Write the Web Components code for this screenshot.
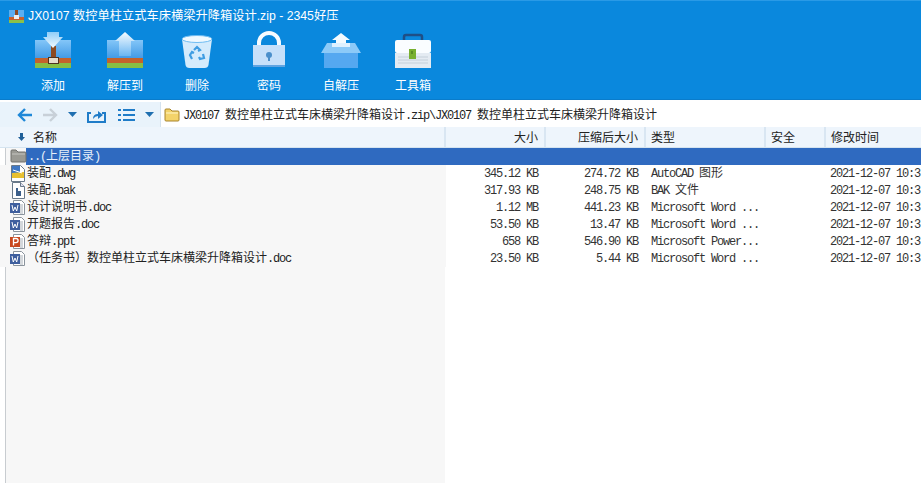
<!DOCTYPE html>
<html>
<head>
<meta charset="utf-8">
<style>
html, body { margin: 0; height: 100%; overflow: hidden; }
body { font-family: "Noto Sans CJK SC", sans-serif; }
</style>
</head>
<body>
<zip-window></zip-window>
<script>
const ICONS = {
  add: `<svg width="42" height="38" viewBox="0 0 42 38">
    <defs><linearGradient id="b" x1="0" y1="0" x2="0" y2="1"><stop offset="0" stop-color="#84c6f8"/><stop offset="1" stop-color="#439be6"/></linearGradient>
    <linearGradient id="w" x1="0" y1="0" x2="0" y2="1"><stop offset="0" stop-color="#8fcdf8"/><stop offset="1" stop-color="#f4fbff"/></linearGradient></defs>
    <path d="M3 9h36v18H3z" fill="url(#b)"/><path d="M3 27h36v5H3z" fill="#c4622c"/><path d="M3 32h36v5H3z" fill="#86bf45"/>
    <path d="M19 15h5v12h-5z" fill="#8c4a22"/><rect x="16.500" y="26.500" width="10" height="6" fill="#e6dccb" stroke="#4e3320"/>
    <path d="M15 1h12v5h4L21 17 11 6h4z" fill="url(#w)"/></svg>`,
  extract: `<svg width="42" height="38" viewBox="0 0 42 38">
    <defs><linearGradient id="b2" x1="0" y1="0" x2="0" y2="1"><stop offset="0" stop-color="#84c6f8"/><stop offset="1" stop-color="#439be6"/></linearGradient>
    <linearGradient id="w2" x1="0" y1="0" x2="0" y2="1"><stop offset="0" stop-color="#f6fcff"/><stop offset="1" stop-color="#6ab6f2"/></linearGradient></defs>
    <path d="M3 9h36v18H3z" fill="url(#b2)"/><path d="M3 27h36v5H3z" fill="#c4622c"/><path d="M3 32h36v5H3z" fill="#86bf45"/>
    <path d="M21 1l10 9h-4v15H15V10h-4z" fill="url(#w2)"/></svg>`,
  del: `<svg width="34" height="38" viewBox="0 0 34 38">
    <path d="M2 8l3.500 26q.5 3 4 3h15q3.500 0 4-3L32 8z" fill="#d4ebfc"/><ellipse cx="17" cy="8" rx="15" ry="3.500" fill="#f0f9ff" stroke="#6fbcf2"/>
    <path d="M14 19l3-3 3 3-2 1M23 23l1 4-4 1-1-2M12 28l-2-4 2-3 2 1" fill="none" stroke="#3f9de2" stroke-width="2.200"/></svg>`,
  lock: `<svg width="34" height="38" viewBox="0 0 34 38">
    <path d="M7 16V12a10 10 0 0 1 20 0v4" fill="none" stroke="#f6fbff" stroke-width="4"/>
    <rect x="1" y="14" width="32" height="22" fill="#c6e0fa"/><path d="M1 34h32v2H1z" fill="#5fa4e2"/><circle cx="17" cy="24" r="3" fill="#4b8fcb"/><path d="M16 25h2v5h-2z" fill="#4b8fcb"/></svg>`,
  self: `<svg width="42" height="38" viewBox="0 0 42 38">
    <path d="M21 2l9 7h-4v6H16V9h-4z" fill="#f4fbff"/><path d="M4 22h34v15H4z" fill="#55a8f0"/><path d="M1 22l6-10h28l6 10z" fill="#8ccaf8"/><path d="M12 12h18v4H12z" fill="#dff1ff"/></svg>`,
  tools: `<svg width="38" height="38" viewBox="0 0 38 38">
    <path d="M10 9V6q0-2 2-2h14q2 0 2 2v3" fill="none" stroke="#1f4f86" stroke-width="2.500"/>
    <rect x="1" y="9" width="36" height="13" rx="2" fill="#fafdff"/><rect x="1" y="22" width="36" height="15" fill="#e4ebf2"/>
    <path d="M4 26h30M4 29h30M4 32h30" stroke="#c5d0da"/><rect x="15" y="18" width="7" height="10" fill="#78b030"/><path d="M18 20v3" stroke="#3c6a18"/></svg>`,
  folder: `<svg width="16" height="15" viewBox="0 0 16 15">
    <path d="M1 3q0-1 1-1h4l2 2h6q1 0 1 1v8q0 1-1 1H2q-1 0-1-1z" fill="#f3d36a" stroke="#a8842c"/><path d="M2 6h12" stroke="#fff6c8"/></svg>`,
  up: `<svg width="17" height="15" viewBox="0 0 17 15">
    <path d="M1 3q0-1 1-1h4l2 2h7q1 0 1 1v8q0 1-1 1H2q-1 0-1-1z" fill="#9a9a94" stroke="#70706c"/><path d="M2 6h13" stroke="#c4c4c0"/></svg>`,
  dwg: `<svg width="16" height="17" viewBox="0 0 16 17">
    <path d="M1.500.5h9l4 4v12h-13z" fill="#fff" stroke="#6a7a8a"/><path d="M2 1h8v7H2z" fill="#3f78c4"/><path d="M2 8l12-1v6H2z" fill="#e8c030"/><path d="M3 5l9 3" stroke="#fff"/><path d="M2 13h12v3H2z" fill="#fff"/></svg>`,
  bak: `<svg width="16" height="17" viewBox="0 0 16 17">
    <path d="M2.500.5h8l4 4v12h-12z" fill="#fff" stroke="#6a7a8a"/><path d="M10.500.5v4h4" fill="#dde" stroke="#6a7a8a"/><path d="M6 6h2v8H6zM8 9h3v5H8z" fill="#3c5f8a"/></svg>`,
  doc: `<svg width="16" height="17" viewBox="0 0 16 17">
    <path d="M3.500 1.500h8l3 3v11h-11z" fill="#fff" stroke="#8a939c"/><path d="M10 6h3M10 8h3M10 10h3M10 12h3M10 14h3" stroke="#a8b0b8"/>
    <rect x="0" y="4" width="10" height="10" fill="#3f5f9e"/><path d="M2 6l1.300 6 1.700-4 1.700 4L8 6" fill="none" stroke="#fff"/></svg>`,
  ppt: `<svg width="16" height="17" viewBox="0 0 16 17">
    <path d="M3.500 1.500h8l3 3v11h-11z" fill="#fff" stroke="#8a939c"/><path d="M10 6h3M10 8h3M10 10h3M10 12h3M10 14h3" stroke="#a8b0b8"/>
    <rect x="0" y="4" width="10" height="10" fill="#c8481e"/><path d="M3.500 12.500v-7h2.500a2 2 0 0 1 0 4.200H3.500" fill="none" stroke="#fff" stroke-width="1.300"/></svg>`
};

// latin runs take 6px a character, han 12px, as in the bitmap font of the reference
class MonoText extends HTMLElement {
  constructor() {
    super();
    this.attachShadow({ mode: "open" });
  }

  connectedCallback() {
    const runs = this.textContent.match(/[\x20-\x7e]+|[^\x20-\x7e]+/g) || [];
    this.shadowRoot.innerHTML = `
      <style>
        :host { display: inline; }
        span { white-space: pre; line-height: 14px; }
        .a { font-family: "Liberation Mono", monospace; font-size: 12px; letter-spacing: -1.200px; }
        .c { font-family: "Noto Sans CJK SC", sans-serif; font-size: 12px; }
      </style>
      ${runs.map(r => `<span class="${/^[\x20-\x7e]/.test(r) ? "a" : "c"}">${r}</span>`).join("")}`;
  }
}

class ToolButton extends HTMLElement {
  constructor() {
    super();
    this.attachShadow({ mode: "open" });
    this.shadowRoot.innerHTML = `
      <style>
        :host { display: flex; flex-direction: column; align-items: center; width: 72px; }
        .icon { height: 38px; display: flex; align-items: flex-end; justify-content: center; margin-bottom: 8px; }
        .label { font-size: 12px; line-height: 16px; color: #fff; }
      </style>
      <div class="icon">${ICONS[this.getAttribute("icon")]}</div>
      <div class="label"><slot></slot></div>`;
  }
}

class TitleBar extends HTMLElement {
  constructor() {
    super();
    this.attachShadow({ mode: "open" });
    this.shadowRoot.innerHTML = `
      <style>
        :host { display: block; height: 100px; box-sizing: border-box; background: #0a88dd; border-top: 1px solid #2a9ae6; border-bottom: 1px solid #0a7ccb; }
        .title { display: flex; align-items: center; gap: 4px; height: 30px; padding-left: 9px; font: 12.250px/16px "Liberation Sans", "Noto Sans CJK SC", sans-serif; color: #fff; }
        .tools { display: flex; padding-left: 17px; }
      </style>
      <div class="title">
        <svg width="15" height="14" viewBox="0 0 15 14"><path d="M0 1h15v7H0z" fill="#5aaef0"/><path d="M0 8h15v3H0z" fill="#c8602c"/><path d="M0 11h15v3H0z" fill="#8cc04a"/><path d="M6 1h3v7H6z" fill="#8c4a22"/><rect x="5" y="6" width="5" height="4" fill="#eee"/></svg>
        <span>JX0107 数控单柱立式车床横梁升降箱设计.zip - 2345好压</span>
      </div>
      <div class="tools">
        <tool-button icon="add">添加</tool-button>
        <tool-button icon="extract">解压到</tool-button>
        <tool-button icon="del">删除</tool-button>
        <tool-button icon="lock">密码</tool-button>
        <tool-button icon="self">自解压</tool-button>
        <tool-button icon="tools">工具箱</tool-button>
      </div>`;
  }
}

class NavBar extends HTMLElement {
  constructor() {
    super();
    this.attachShadow({ mode: "open" });
    this.shadowRoot.innerHTML = `
      <style>
        :host { display: flex; align-items: center; height: 27px; box-sizing: border-box; background: #e9f3fb; border-top: 2px solid #fff; padding-left: 17px; }
        svg { display: block; flex: none; }
        .path { flex: 1; display: flex; align-items: center; gap: 3px; align-self: stretch; background: #fff; margin-left: 6px; padding-left: 3px; font-size: 12px; line-height: 14px; color: #222; white-space: nowrap; border-left: 1px solid #d4e2ee; }
      </style>
      <svg width="16" height="16" viewBox="0 0 16 16"><path d="M8 2L2 8l6 6M2 8h13" fill="none" stroke="#1f88d8" stroke-width="2.400"/></svg>
      <svg style="margin-left:9px" width="16" height="16" viewBox="0 0 16 16"><path d="M8 2l6 6-6 6M14 8H1" fill="none" stroke="#c8d0d8" stroke-width="2.400"/></svg>
      <svg style="margin-left:10px" width="9" height="5" viewBox="0 0 9 5"><path d="M0 0h9L4.500 5z" fill="#1f6fb0"/></svg>
      <svg style="margin-left:10px" width="19" height="16" viewBox="0 0 19 16"><path d="M4 6H1v9h17V6h-3" fill="none" stroke="#1f7cc8" stroke-width="2"/><path d="M6 12q0-5 5-5V4l5 4-5 4V9q-3 0-5 3z" fill="#1f7cc8"/></svg>
      <svg style="margin-left:12px" width="17" height="12" viewBox="0 0 17 12"><path d="M0 1h3M5 1h12M0 6h3M5 6h12M0 11h3M5 11h12" stroke="#1f7cc8" stroke-width="2"/></svg>
      <svg style="margin-left:10px" width="9" height="5" viewBox="0 0 9 5"><path d="M0 0h9L4.500 5z" fill="#1f6fb0"/></svg>
      <div class="path">${ICONS.folder}<span><mono-text>JX0107 数控单柱立式车床横梁升降箱设计.zip\\JX0107 数控单柱立式车床横梁升降箱设计</mono-text></span></div>`;
  }
}

const COLUMNS = "446px 100px 100px 120px 60px 1fr";

class ListHeader extends HTMLElement {
  constructor() {
    super();
    this.attachShadow({ mode: "open" });
    this.shadowRoot.innerHTML = `
      <style>
        :host { display: grid; grid-template-columns: ${COLUMNS}; height: 21px; box-sizing: border-box; background: #eef5fc; border-bottom: 1px solid #d5e4f0; font-size: 12px; line-height: 20px; color: #222; }
        div { border-right: 2px solid #d9e6f2; padding: 0 6px 0 5px; white-space: nowrap; }
        .r { text-align: right; }
        .name { display: flex; align-items: center; gap: 8px; padding-left: 18px; }
      </style>
      <div class="name"><svg width="7" height="8" viewBox="0 0 7 8"><path d="M2 0h3v4h2L3.500 8 0 4h2z" fill="#1f5f98"/></svg>名称</div>
      <div class="r">大小</div><div class="r">压缩后大小</div><div>类型</div><div>安全</div><div style="border:0">修改时间</div>`;
  }
}

class FileRow extends HTMLElement {
  constructor() {
    super();
    this.attachShadow({ mode: "open" });
    const a = n => this.getAttribute(n) || "";
    const mono = t => `<mono-text>${t}</mono-text>`;
    this.shadowRoot.innerHTML = `
      <style>
        :host { display: grid; grid-template-columns: ${COLUMNS}; height: 17px; font-size: 12px; line-height: 14px; color: #333; white-space: nowrap; }
        :host([selected]) { background: linear-gradient(to right, transparent 26px, #2f6ac0 26px); color: #e8f0fa; }
        div { height: 17px; box-sizing: border-box; padding: 0 8px 0 5px; }
        .r { text-align: right; }
        .name { display: flex; padding: 0 0 0 10px; background: #f7f7f7; color: #222; }
        .name span { padding: 0 0 0 1px; }
        :host([selected]) .name { background: transparent; color: #e8f0fa; }
        svg { flex: none; }
        .end { padding: 0 0 0 4px; }
      </style>
      <div class="name">${ICONS[a("icon")]}<span><slot></slot></span></div>
      <div class="r">${mono(a("size"))}</div><div class="r">${mono(a("packed"))}</div><div>${mono(a("type"))}</div><div></div><div class="end">${mono(a("date"))}</div>`;
  }
}

class ZipWindow extends HTMLElement {
  constructor() {
    super();
    this.attachShadow({ mode: "open" });
    this.shadowRoot.innerHTML = `
      <style>
        :host { display: flex; flex-direction: column; height: 100vh; overflow: hidden; background: #fff; }
        .list { flex: 1; background: linear-gradient(to right, #fff 5px, #c8ccd0 5px, #c8ccd0 6px, #f7f7f7 6px, #f7f7f7 445px, #fff 445px); }
      </style>
      <title-bar></title-bar>
      <nav-bar></nav-bar>
      <div class="list">
        <list-header></list-header>
        <file-row selected icon="up"><mono-text>..(上层目录)</mono-text></file-row>
        <file-row icon="dwg" size="345.12 KB" packed="274.72 KB" type="AutoCAD 图形" date="2021-12-07 10:3"><mono-text>装配.dwg</mono-text></file-row>
        <file-row icon="bak" size="317.93 KB" packed="248.75 KB" type="BAK 文件" date="2021-12-07 10:3"><mono-text>装配.bak</mono-text></file-row>
        <file-row icon="doc" size="1.12 MB" packed="441.23 KB" type="Microsoft Word ..." date="2021-12-07 10:3"><mono-text>设计说明书.doc</mono-text></file-row>
        <file-row icon="doc" size="53.50 KB" packed="13.47 KB" type="Microsoft Word ..." date="2021-12-07 10:3"><mono-text>开题报告.doc</mono-text></file-row>
        <file-row icon="ppt" size="658 KB" packed="546.90 KB" type="Microsoft Power..." date="2021-12-07 10:3"><mono-text>答辩.ppt</mono-text></file-row>
        <file-row icon="doc" size="23.50 KB" packed="5.44 KB" type="Microsoft Word ..." date="2021-12-07 10:3"><mono-text>（任务书）数控单柱立式车床横梁升降箱设计.doc</mono-text></file-row>
      </div>`;
  }
}

customElements.define("mono-text", MonoText);
customElements.define("tool-button", ToolButton);
customElements.define("title-bar", TitleBar);
customElements.define("nav-bar", NavBar);
customElements.define("list-header", ListHeader);
customElements.define("file-row", FileRow);
customElements.define("zip-window", ZipWindow);
</script>
</body>
</html>
